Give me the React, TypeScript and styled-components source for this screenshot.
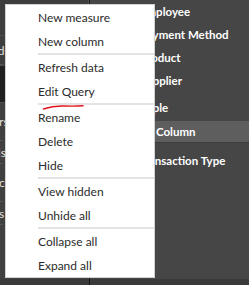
import React from "react";
import styled, { createGlobalStyle } from "styled-components";

const GlobalStyle = createGlobalStyle`
  html, body { margin: 0; padding: 0; background: #464646; overflow: hidden; }
  * { box-sizing: border-box; }
`;

const Screen = styled.div`
  position: relative;
  width: 249px;
  height: 285px;
  display: grid;
  grid-template-columns: 89px 1px 1fr;
  grid-template-rows: 279px 6px;
  background: #464646;
  font-family: "Lato", "Liberation Sans", sans-serif;
  overflow: hidden;
`;

const LeftPanel = styled.div`
  display: flex;
  flex-direction: column;
  background: #404040;
  overflow: hidden;
  border-right: 1px solid #505050;
`;

const Block = styled.div<{ $h: number; $bg: string }>`
  height: ${(p) => p.$h}px;
  background: ${(p) => p.$bg};
  border-bottom: 1px solid #4c4c4c;
  display: flex;
  flex-direction: column;
  justify-content: flex-end;
`;

const LeftRow = styled.div<{ $h: number }>`
  height: ${(p) => p.$h}px;
  display: flex;
  align-items: center;
  border-bottom: 1px dashed #555;
  color: #e2e2e2;
  font-size: 12px;
  white-space: nowrap;
  overflow: hidden;
`;

const LeftLabel = styled.span<{ $shift: number }>`
  margin-left: ${(p) => p.$shift}px;
`;

const Divider = styled.div`
  background: #1a1a1a;
  grid-row: 1 / span 2;
  grid-column: 2;
`;

const RightPanel = styled.div`
  display: flex;
  flex-direction: column;
  background: #464646;
`;

const FieldRow = styled.div<{ $h: number; $indent: number; $active?: boolean; $gap?: number }>`
  height: ${(p) => p.$h}px;
  margin-top: ${(p) => p.$gap ?? 0}px;
  padding-left: ${(p) => p.$indent}px;
  display: flex;
  align-items: center;
  color: #ffffff;
  font-size: 11.5px;
  font-weight: 700;
  white-space: nowrap;
  background: ${(p) => (p.$active ? "#5e5e5e" : "transparent")};
  border-bottom: ${(p) => (p.$active ? "1px solid #3b3b3b" : "none")};
`;

const BottomBar = styled.div`
  grid-column: 1 / span 3;
  grid-row: 2;
  background: #3a3a3a;
  display: grid;
  grid-template-columns: 89px 1px 1fr;
`;

const BottomDivider = styled.div`
  background: #141414;
`;

const Menu = styled.div`
  position: absolute;
  left: 5px;
  top: 4px;
  width: 150px;
  height: 274px;
  background: #ffffff;
  border: 1px solid #d2d2d2;
  display: flex;
  flex-direction: column;
  font-family: "Lato", "Liberation Sans", sans-serif;
`;

const MenuItem = styled.div`
  height: 24px;
  display: flex;
  align-items: center;
  padding-left: 32px;
  font-size: 12px;
  color: #2b2b2b;
  white-space: nowrap;
`;

const Separator = styled.div`
  height: 2px;
  margin-left: 32px;
  background: #e4e4e4;
`;

const Squiggle = styled.svg`
  position: absolute;
  left: 0;
  top: 0;
  pointer-events: none;
`;

type Entry = { label: string } | { sep: true };

const entries: Entry[] = [
  { label: "New measure" },
  { label: "New column" },
  { sep: true },
  { label: "Refresh data" },
  { label: "Edit Query" },
  { sep: true },
  { label: "Rename" },
  { label: "Delete" },
  { label: "Hide" },
  { sep: true },
  { label: "View hidden" },
  { label: "Unhide all" },
  { sep: true },
  { label: "Collapse all" },
  { label: "Expand all" },
];

export default function App() {
  return (
    <>
      <GlobalStyle />
      <Screen>
        <LeftPanel>
          <Block $h={36} $bg="#3e3e3e" />
          <Block $h={30} $bg="#3e3e3e">
            <LeftRow $h={29}>
              <LeftLabel $shift={-21}>Fields</LeftLabel>
            </LeftRow>
          </Block>
          <Block $h={37} $bg="#202020" />
          <LeftRow $h={38}>
            <LeftLabel $shift={-24}>Filters</LeftLabel>
          </LeftRow>
          <LeftRow $h={23}>
            <LeftLabel $shift={-31}>Visuals</LeftLabel>
          </LeftRow>
          <LeftRow $h={38}>
            <LeftLabel $shift={-25}>Source</LeftLabel>
          </LeftRow>
          <LeftRow $h={23}>
            <LeftLabel $shift={-30}>Values</LeftLabel>
          </LeftRow>
        </LeftPanel>
        <Divider />
        <RightPanel>
          <FieldRow $h={23} $indent={50}>Employee</FieldRow>
          <FieldRow $h={23} $indent={50}>Payment Method</FieldRow>
          <FieldRow $h={23} $indent={50}>Product</FieldRow>
          <FieldRow $h={23} $indent={50}>Supplier</FieldRow>
          <FieldRow $h={24} $indent={41} $gap={3}>Sample</FieldRow>
          <FieldRow $h={22} $indent={66} $gap={2} $active>
            Column
          </FieldRow>
          <FieldRow $h={24} $indent={49} $gap={5}>Transaction Type</FieldRow>
        </RightPanel>
        <BottomBar>
          <div />
          <BottomDivider />
          <div />
        </BottomBar>
        <Menu>
          {entries.map((e, i) =>
            "sep" in e ? <Separator key={i} /> : <MenuItem key={i}>{e.label}</MenuItem>
          )}
          <Squiggle width="150" height="274" viewBox="0 0 150 274">
            <path
              d="M37.5 104 Q47 100.6 58 101 T77 100.8"
              fill="none"
              stroke="#e3141c"
              strokeWidth="1.4"
              strokeLinecap="round"
            />
          </Squiggle>
        </Menu>
      </Screen>
    </>
  );
}
